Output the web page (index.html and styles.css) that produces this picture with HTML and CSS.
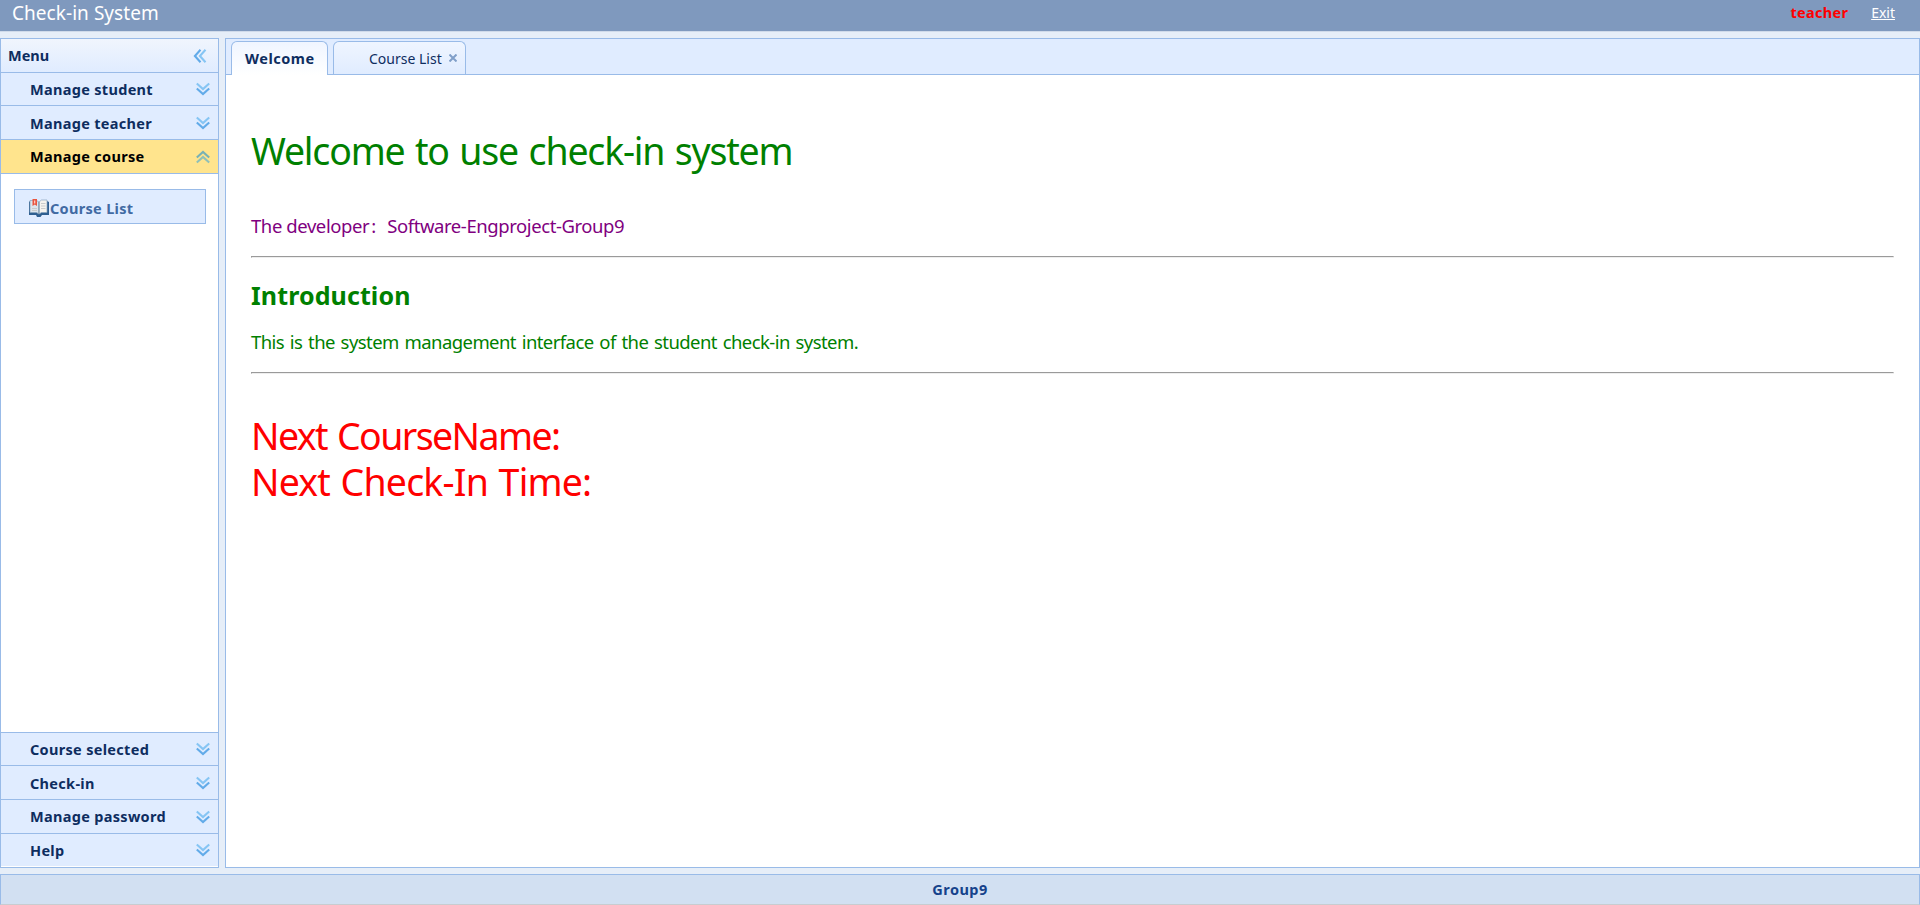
FILE: index.html
```html
<!DOCTYPE html>
<html lang="en">
<head>
<meta charset="utf-8">
<title>Check-in System</title>
<link rel="stylesheet" href="styles.css">
</head>
<body>
<svg class="defs" width="0" height="0" aria-hidden="true">
  <symbol id="chev" viewBox="0 0 16 16">
    <g fill="none" stroke-width="2.1">
      <path d="M1.800 2.500 8 8.100 14.200 2.500" stroke="#86c5f4"/>
      <path d="M1.800 7.500 8 13.100 14.200 7.500" stroke="#62abe9"/>
    </g>
  </symbol>
  <symbol id="chev-on" viewBox="0 0 16 16">
    <g fill="none" stroke-width="2.1">
      <path d="M1.800 8.500 8 2.900 14.200 8.500" stroke="#78b1b4"/>
      <path d="M1.800 13.500 8 7.900 14.200 13.500" stroke="#8fc0b8"/>
    </g>
  </symbol>
</svg>
<div class="app">
  <header class="top">
    <span class="brand">Check-in System</span>
    <span class="user">teacher</span>
    <a class="exit" href="#">Exit</a>
  </header>
  <div class="body">
    <aside class="side">
      <div class="side-head"><span class="t-menu">Menu</span><svg class="chev left"><use href="#chev"/></svg></div>
      <div class="row"><span>Manage student</span><svg class="chev"><use href="#chev"/></svg></div>
      <div class="row tall"><span class="low">Manage teacher</span><svg class="chev"><use href="#chev"/></svg></div>
      <div class="row tall active"><span class="high">Manage course</span><svg class="chev"><use href="#chev-on"/></svg></div>
      <div class="panel">
        <div class="item">
          <svg class="book" viewBox="0 0 20 18">
            <path d="M0 3l1-1v11h8l1 1 1-1h7V2l2 1v13h-7l-1.500 2h-3.500l-1-2H0z" fill="#2f5f90"/>
            <path d="M1 1.500h6.500L10 3v12l-2.500-1.500H1z" fill="#dce5ec" stroke="#86a3bd" stroke-width=".7"/>
            <path d="M10 3l2.500-2H18v12.500h-5.500L10 15z" fill="#f5f3ee" stroke="#86a3bd" stroke-width=".7"/>
            <path d="M10 3v12" stroke="#7b93a8" stroke-width="1"/>
            <path d="M12 4.500h4.500M12 7h4.500M12 9.500h4.500M3 9.500h5M3 11.500h5" stroke="#c9cbcb" stroke-width="1"/>
            <path d="M3.500 0h4.500v7L5.800 5.500 3.500 7z" fill="#e8553f"/>
            <path d="M5.700 1.500v3" stroke="#ffd5cc" stroke-width="1.200"/>
          </svg>
          <span class="t-item">Course List</span>
        </div>
      </div>
      <div class="row first"><span>Course selected</span><svg class="chev"><use href="#chev"/></svg></div>
      <div class="row tall"><span class="low">Check-in</span><svg class="chev"><use href="#chev"/></svg></div>
      <div class="row tall"><span class="high">Manage password</span><svg class="chev"><use href="#chev"/></svg></div>
      <div class="row last"><span>Help</span><svg class="chev"><use href="#chev"/></svg></div>
    </aside>
    <main class="main">
      <nav class="tabs">
        <div class="tab on"><span class="high">Welcome</span></div>
        <div class="tab list"><span>Course List</span><svg class="close" viewBox="0 0 8 8"><path d="M.5.5l7 7M7.500.5l-7 7" stroke="#809fc9" stroke-width="2"/></svg></div>
      </nav>
      <section class="content">
        <h1>Welcome to use check-in system</h1>
        <p class="dev"><span>The developer</span><span class="colon">:</span><span>Software-Engproject-Group9</span></p>
        <hr>
        <h2>Introduction</h2>
        <p class="intro">This is the system management interface of the student check-in system.</p>
        <hr>
        <div class="next course">Next CourseName:</div>
        <div class="next">Next Check-In Time:</div>
      </section>
    </main>
  </div>
  <footer class="foot">Group9</footer>
</div>
</body>
</html>
```
FILE: styles.css
```css
* { box-sizing: border-box; }
body { margin: 0; font-family: "Noto Sans", sans-serif; font-size: 14px; color: #0e2d5f; overflow: hidden; }
.defs { position: absolute; }
.app { height: 905px; display: flex; flex-direction: column; background: #e6eef8; }
.top { height: 32px; flex: none; display: flex; padding-left: 12px; padding-right: 25px; background: #7f99be; border-bottom: 1px solid #d0dbea; color: #fff; line-height: 25px; }
.brand { font-size: 19px; line-height: 27px; letter-spacing: .05px; flex: 1; }
.user { color: #f00; font-size: 14.5px; font-weight: bold; margin-right: 23px; letter-spacing: .28px; }
.exit { color: #fff; }
.body { flex: none; height: 830px; margin-top: 6px; display: flex; gap: 6px; }
.side { width: 219px; border: 1px solid #99bbe8; background: #fff; display: flex; flex-direction: column; font-size: 14.5px; font-weight: bold; letter-spacing: .31px; }
.side-head { height: 34px; flex: none; padding: 0 10px 0 7px; display: flex; align-items: center; justify-content: space-between; border-bottom: 1px solid #99bbe8; background: linear-gradient(#f0f5fd, #e0ecff); }
.row { height: 33px; flex: none; padding: 0 7px 0 29px; display: flex; align-items: center; justify-content: space-between; border-bottom: 1px solid #99bbe8; background: #e0ecff; }
.tall { height: 34px; }
.low { padding-top: 1px; }
.high { padding-bottom: 2px; }
.active { background: #ffe48d; color: #000; }
.first { height: 34px; border-top: 1px solid #99bbe8; }
.last { border-bottom-color: #fff; }
.chev { width: 16px; height: 16px; flex: none; }
.left { transform: rotate(90deg); }
.t-menu { letter-spacing: 0; padding-bottom: 2px; }
.t-item { padding-top: 3px; }
.panel { flex: 1; padding: 15px 12px 0 13px; }
.item { height: 35px; border: 1px solid #99bbe8; background: #e0ecff; padding-left: 14px; display: flex; align-items: center; gap: 1px; color: #416aa3; }
.book { width: 20px; height: 18px; margin-top: 2px; }
.main { flex: 1; border: 1px solid #99bbe8; background: #fff; }
.tabs { height: 36px; padding: 2px 5px 0; display: flex; gap: 5px; background: #e0ecff; border-bottom: 1px solid #99bbe8; }
.tab { height: 33px; border: 1px solid #99bbe8; border-bottom: 0; border-radius: 6px 6px 0 0; display: flex; align-items: center; background: linear-gradient(#eff5ff, #e0ecff); }
.on { width: 97px; height: 34px; padding-left: 13px; font-size: 14.5px; font-weight: bold; letter-spacing: .5px; background: linear-gradient(#eff5ff, #fff); }
.list { width: 133px; padding-left: 35px; gap: 7px; }
.close { width: 8px; height: 8px; }
.content { padding: 0 25px; }
h1 { margin: 53px 0 0; font-size: 37.5px; font-weight: normal; line-height: 46px; letter-spacing: -1.2px; word-spacing: 2px; color: green; }
p { margin: 0; font-size: 18.5px; line-height: 24px; }
.dev { margin-top: 40px; color: purple; display: flex; letter-spacing: -.42px; }
.colon { width: 18px; padding-left: 2px; }
hr { margin: 18px 0 0; }
h2 { margin: 21px 0 0; font-size: 25px; line-height: 32px; color: green; letter-spacing: .1px; }
.intro { margin-top: 19px; color: green; letter-spacing: -.57px; word-spacing: 1.5px; }
.next { font-size: 37.5px; line-height: 46px; color: #f00; letter-spacing: -.8px; word-spacing: 1.5px; }
.course { margin-top: 39px; letter-spacing: -1.6px; word-spacing: 2px; }
.foot { height: 31px; flex: none; margin-top: 6px; border: 1px solid #99bbe8; border-bottom-color: #c8ccd0; background: #d2e0f2; color: #15428b; font-size: 14.5px; font-weight: bold; letter-spacing: .45px; text-align: center; line-height: 28px; }
```
